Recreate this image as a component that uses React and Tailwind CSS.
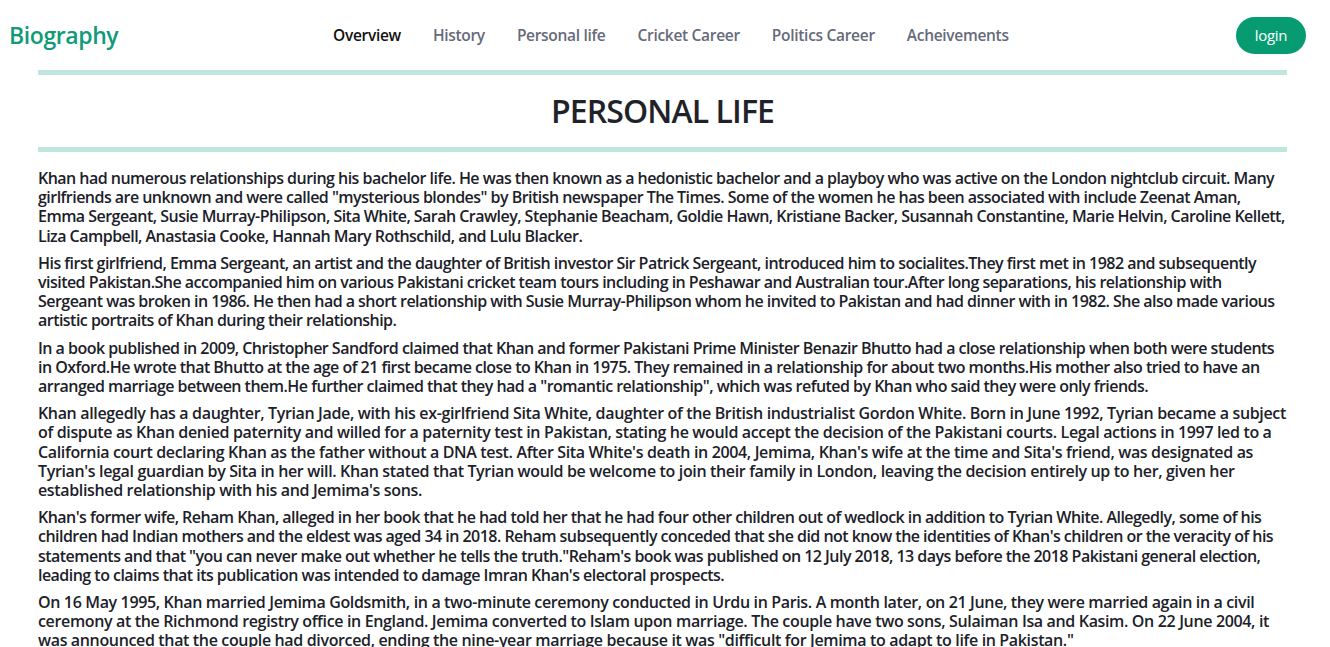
import React from "react";

const links = ["Overview", "History", "Personal life", "Cricket Career", "Politics Career", "Acheivements"];

const paragraphs = [
  'Khan had numerous relationships during his bachelor life. He was then known as a hedonistic bachelor and a playboy who was active on the London nightclub circuit. Many girlfriends are unknown and were called "mysterious blondes" by British newspaper The Times. Some of the women he has been associated with include Zeenat Aman, Emma Sergeant, Susie Murray-Philipson, Sita White, Sarah Crawley, Stephanie Beacham, Goldie Hawn, Kristiane Backer, Susannah Constantine, Marie Helvin, Caroline Kellett, Liza Campbell, Anastasia Cooke, Hannah Mary Rothschild, and Lulu Blacker.',
  "His first girlfriend, Emma Sergeant, an artist and the daughter of British investor Sir Patrick Sergeant, introduced him to socialites.They first met in 1982 and subsequently visited Pakistan.She accompanied him on various Pakistani cricket team tours including in Peshawar and Australian tour.After long separations, his relationship with Sergeant was broken in 1986. He then had a short relationship with Susie Murray-Philipson whom he invited to Pakistan and had dinner with in 1982. She also made various artistic portraits of Khan during their relationship.",
  'In a book published in 2009, Christopher Sandford claimed that Khan and former Pakistani Prime Minister Benazir Bhutto had a close relationship when both were students in Oxford.He wrote that Bhutto at the age of 21 first became close to Khan in 1975. They remained in a relationship for about two months.His mother also tried to have an arranged marriage between them.He further claimed that they had a "romantic relationship", which was refuted by Khan who said they were only friends.',
  "Khan allegedly has a daughter, Tyrian Jade, with his ex-girlfriend Sita White, daughter of the British industrialist Gordon White. Born in June 1992, Tyrian became a subject of dispute as Khan denied paternity and willed for a paternity test in Pakistan, stating he would accept the decision of the Pakistani courts. Legal actions in 1997 led to a California court declaring Khan as the father without a DNA test. After Sita White's death in 2004, Jemima, Khan's wife at the time and Sita's friend, was designated as Tyrian's legal guardian by Sita in her will. Khan stated that Tyrian would be welcome to join their family in London, leaving the decision entirely up to her, given her established relationship with his and Jemima's sons.",
  'Khan\'s former wife, Reham Khan, alleged in her book that he had told her that he had four other children out of wedlock in addition to Tyrian White. Allegedly, some of his children had Indian mothers and the eldest was aged 34 in 2018. Reham subsequently conceded that she did not know the identities of Khan\'s children or the veracity of his statements and that "you can never make out whether he tells the truth."Reham\'s book was published on 12 July 2018, 13 days before the 2018 Pakistani general election, leading to claims that its publication was intended to damage Imran Khan\'s electoral prospects.',
  'On 16 May 1995, Khan married Jemima Goldsmith, in a two-minute ceremony conducted in Urdu in Paris. A month later, on 21 June, they were married again in a civil ceremony at the Richmond registry office in England. Jemima converted to Islam upon marriage. The couple have two sons, Sulaiman Isa and Kasim. On 22 June 2004, it was announced that the couple had divorced, ending the nine-year marriage because it was "difficult for Jemima to adapt to life in Pakistan."',
];

// per-paragraph letter spacing so the line breaks follow the original page
const spacing = [
  "tracking-[-0.53px]",
  "tracking-[-0.53px]",
  "tracking-[-0.53px]",
  "tracking-[-0.35px]",
  "tracking-[-0.53px]",
  "tracking-[-0.35px]",
];

export default function App() {
  return (
    <div className="min-h-screen bg-white font-['Open_Sans',sans-serif]">
      <nav className="flex items-center h-[70px] pl-[9px] pr-[24px]">
        <a className="text-[23px] font-semibold text-[#0f9a7a] tracking-[-0.4px] w-[110px]">Biography</a>
        <ul className="flex items-center gap-[32px] ml-[214px] mt-[2px]">
          {links.map((l, i) => (
            <li
              key={l}
              className={`text-[15.5px] font-semibold tracking-[-0.3px] ${i === 0 ? "text-[#111]" : "text-[#666a7a]"}`}
            >
              {l}
            </li>
          ))}
        </ul>
        <button className="ml-auto mt-[1px] w-[70px] h-[37px] rounded-full bg-[#079b72] text-white text-[15px] tracking-[-0.3px]">
          login
        </button>
      </nav>

      <main className="mx-[38px] mr-[43px]">
        <div className="h-[5px] bg-[#bfe6de]" />
        <h1 className="text-[32px] font-semibold text-[#1f2329] text-center leading-none py-[20px] tracking-[-0.9px]">
          PERSONAL LIFE
        </h1>
        <div className="h-[5px] bg-[#bfe6de]" />
        <div className="pt-[17px]">
          {paragraphs.map((p, i) => (
            <p key={i} className={`text-[16px] leading-[19.2px] font-semibold text-[#1c2129] mb-[8px] ${spacing[i]}`}>
              {p}
            </p>
          ))}
        </div>
      </main>
    </div>
  );
}
